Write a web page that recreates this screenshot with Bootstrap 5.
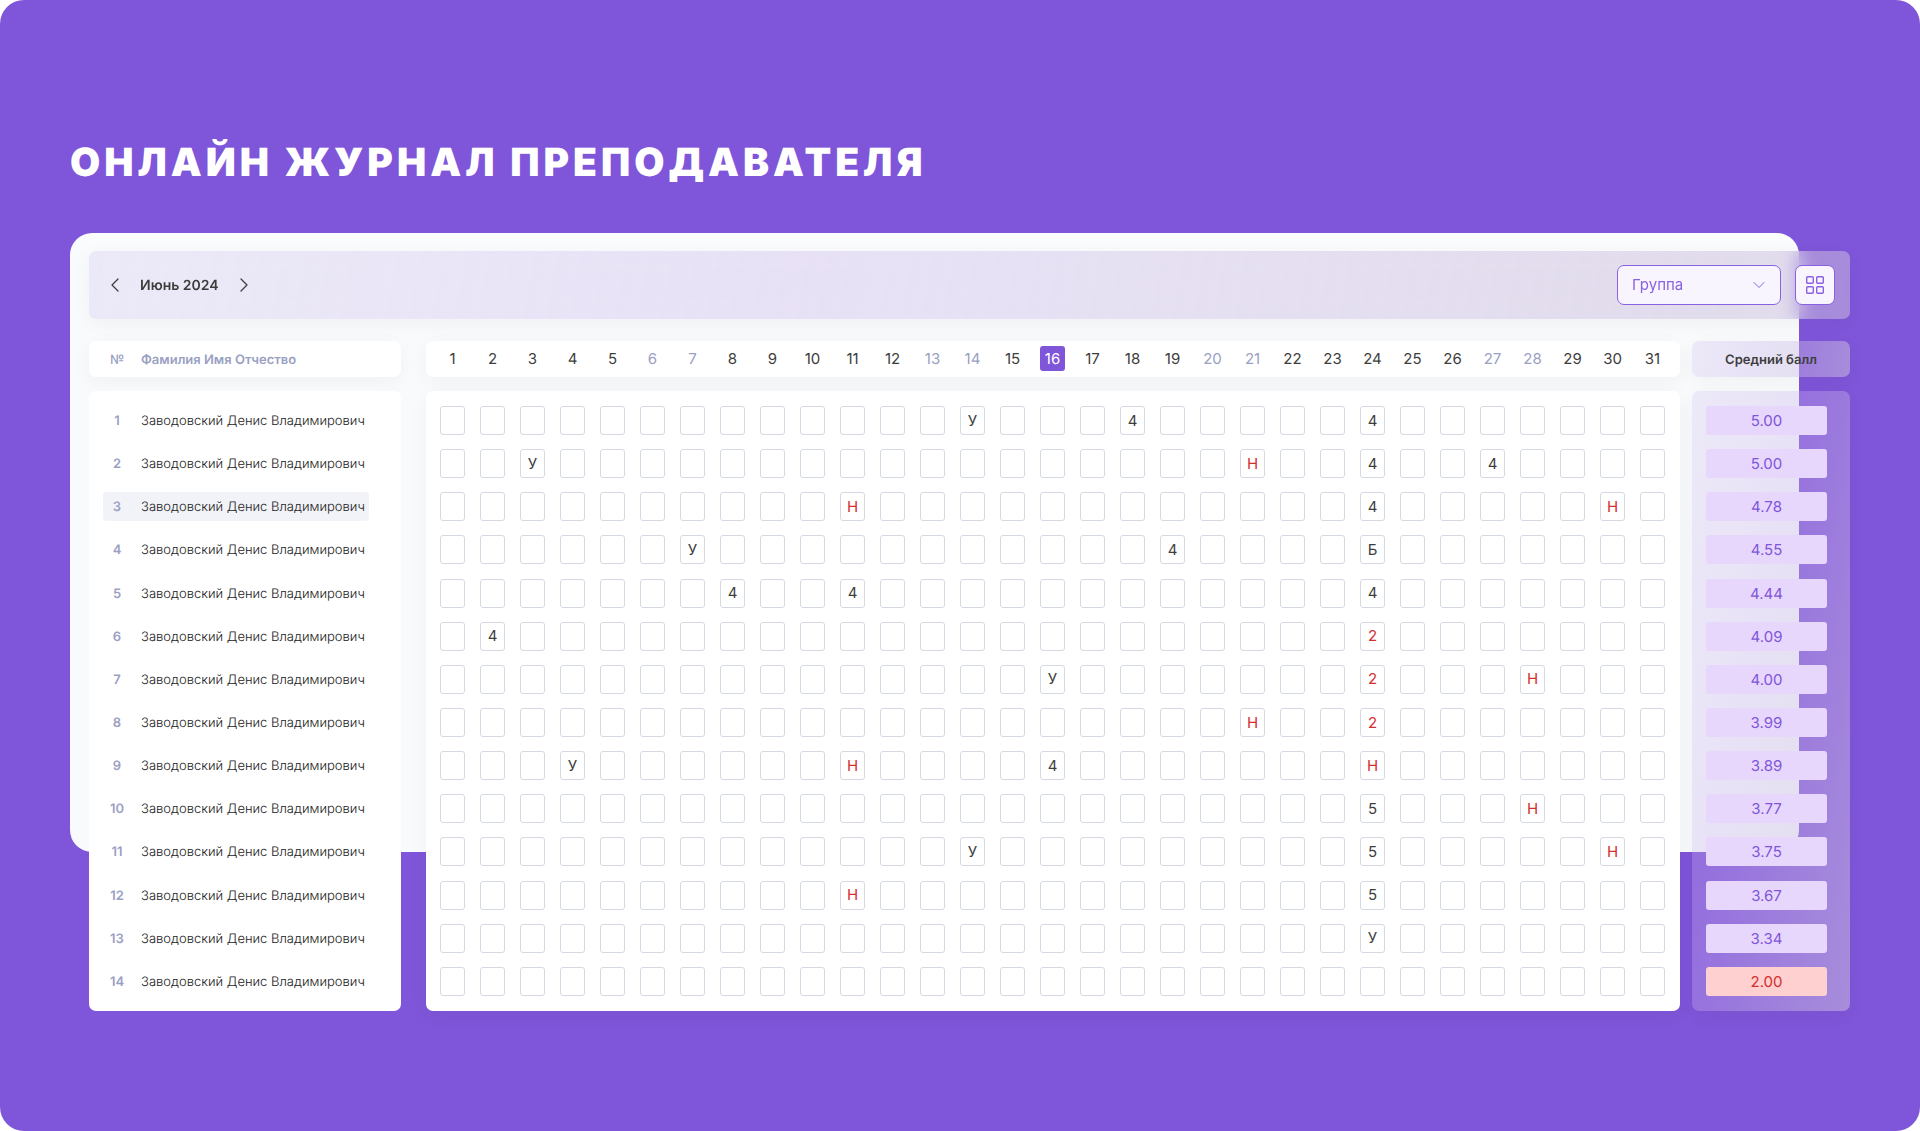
<!DOCTYPE html>
<html lang="ru">
<head>
<meta charset="utf-8">
<meta name="viewport" content="width=device-width, initial-scale=1">
<title>Онлайн журнал преподавателя</title>
<link href="https://cdn.jsdelivr.net/npm/bootstrap@5.3.0/dist/css/bootstrap.min.css" rel="stylesheet">
<style>
  :root {
    --violet: #7f55d9;
    --ink: #3d3d3d;
    --muted-ink: #9a9fc3;
    --danger-ink: #d32f2f;
    --glass: linear-gradient(100deg, rgba(187, 164, 232, .2), rgba(197, 174, 232, .32) 40%, rgba(204, 192, 221, .52));
    --soft-shadow: 0 5px 20px rgba(0, 0, 0, .04);
  }
  body { font-family: Inter, "Noto Sans", sans-serif; font-size: 15px; color: var(--ink); background: #fff; text-rendering: geometricPrecision; }
  .stage { min-height: 100vh; padding: 134px 70px 60px; background: var(--violet); border-radius: 24px; }
  .stage-title { font-size: 39px; line-height: 58px; font-weight: 900; letter-spacing: 4px; margin-bottom: 41px; }

  /* The pale sheet lies behind the journal and ends before it */
  .journal { padding: 18px 0 0 19px; isolation: isolate; }
  .journal::before {
    content: ""; position: absolute; inset: 0 51px 159px 0; z-index: -1;
    background: linear-gradient(#fbfcfd, #f8fafc 24px); border-radius: 22px;
  }

  .toolbar { height: 68px; padding: 0 15px 0 14px; margin-bottom: 22px; border-radius: 7px;
    background: var(--glass); box-shadow: var(--soft-shadow); backdrop-filter: blur(10px); }
  .step-btn { width: 24px; height: 24px; padding: 0; border: 0; background: none; color: var(--ink); display: grid; place-items: center; }
  .month { font-size: 14px; font-weight: 600; margin: 0 13px; }
  .tools { gap: 14px; }
  .group-select.form-select {
    width: 164px; padding: 8px 36px 8px 14px; font-size: 15px; line-height: 22px; color: #8a61e0;
    background-color: #f8f5ff; border: 1px solid #8a61e0; border-radius: 7px;
    background-image: url("data:image/svg+xml,%3Csvg xmlns='http://www.w3.org/2000/svg' viewBox='0 0 12 12'%3E%3Cpath d='M1 3.5l5 5 5-5' fill='none' stroke='%238a61e0' stroke-linecap='round' stroke-linejoin='round'/%3E%3C/svg%3E");
    background-size: 12px; background-position: right 15px center;
  }
  .view-btn { width: 40px; height: 40px; padding: 0; color: #8a61e0; background: #f8f5ff; border: 1px solid #8a61e0; border-radius: 7px; display: grid; place-items: center; }

  .boards { display: grid; grid-template-columns: 312px minmax(0, 1fr) 158px; }
  .board { display: block; border-spacing: 0; }
  .board thead, .board tbody { display: table; width: 100%; table-layout: fixed; border-collapse: separate; border-spacing: 0;
    background: #fff; border-radius: 7px; box-shadow: var(--soft-shadow); }
  .board thead { height: 36px; margin-bottom: 14px; }
  .board tbody { height: 620px; padding: 8px 7px; }
  .board th, .board td { padding: 0; vertical-align: middle; }

  .names-board thead, .names-board tbody { padding-left: 14px; padding-right: 32px; font-size: 13px; }
  .names-board tbody { box-shadow: none; }
  .num { width: 28px; color: var(--muted-ink); font-weight: 600; text-align: center; }
  thead .num { font-weight: 500; }
  .names-board thead th { padding-top: 3px; }
  .names-board .person-head { padding-left: 10px; color: var(--muted-ink); font-weight: 600; }
  .strip { height: 29px; line-height: 29px; white-space: nowrap; }
  .names-board .strip { line-height: 31px; }
  .person { font-weight: 300; color: #222; }
  .person .strip { padding-left: 10px; }
  .active-row .strip { background: #f2f3f8; }
  .active-row .num .strip { border-radius: 4px 0 0 4px; }
  .active-row .person .strip { border-radius: 0 4px 4px 0; }

  .days-board { margin-left: 25px; margin-right: 12px; }
  .days-board thead { padding: 0 7px; }
  .days-board th, .days-board td { padding: 0 8px 0 7px; text-align: center; }
  .days-board thead th { font-weight: 400; vertical-align: top; padding-top: 5px; }
  .day { display: block; height: 25px; line-height: 25px; border-radius: 3px; }
  .day-off { color: var(--muted-ink); }
  .day-now { color: #fff; background: var(--violet); }
  .mark-btn { display: block; width: 100%; height: 29px; padding: 0; line-height: 26px; font-size: 15px; color: var(--ink); background: #fff;
    border: 1px solid #d5d9e3; border-radius: 3px; }
  .mark-bad { color: var(--danger-ink); }

  .score-board thead, .score-board tbody { background: var(--glass); }
  .score-board thead th { padding-top: 3px; font-size: 13px; font-weight: 600; text-align: center; }
  .score-board tbody { padding: 8px 23px 8px 14px; }
  .score { text-align: center; border-radius: 3px; color: #7f55d9; background: #e8d7fd; }
  .score-low { color: var(--danger-ink); background: #ffd0d0; }
</style>
<script src="https://cdn.jsdelivr.net/npm/bootstrap@5.3.0/dist/js/bootstrap.bundle.min.js"></script>
</head>
<body>
<main class="stage">
  <h1 class="stage-title text-white text-uppercase">Онлайн журнал преподавателя</h1>

  <section class="journal position-relative">
    <div class="toolbar d-flex align-items-center">
      <button class="step-btn" type="button" aria-label="Предыдущий месяц">
        <svg width="8" height="14" viewBox="0 0 8 14" fill="none" stroke="currentColor" stroke-width="1.3" stroke-linecap="round" stroke-linejoin="round"><path d="M7 1L1 7l6 6"/></svg>
      </button>
      <span class="month">Июнь 2024</span>
      <button class="step-btn" type="button" aria-label="Следующий месяц">
        <svg width="8" height="14" viewBox="0 0 8 14" fill="none" stroke="currentColor" stroke-width="1.3" stroke-linecap="round" stroke-linejoin="round"><path d="M1 1l6 6-6 6"/></svg>
      </button>
      <div class="tools d-flex ms-auto">
        <select class="form-select group-select" id="group" aria-label="Группа"><option>Группа</option></select>
        <button class="view-btn" type="button" aria-label="Вид сетки">
          <svg width="20" height="20" viewBox="0 0 20 20" fill="none" stroke="currentColor" stroke-width="1.4"><rect x="1.7" y="1.7" width="6.6" height="6.6" rx="1"/><rect x="11.7" y="1.7" width="6.6" height="6.6" rx="1"/><rect x="1.7" y="11.7" width="6.6" height="6.6" rx="1"/><rect x="11.7" y="11.7" width="6.6" height="6.6" rx="1"/></svg>
        </button>
      </div>
    </div>

    <div class="boards">
      <table class="board names-board">
        <thead><tr><th class="num" scope="col">№</th><th class="person-head" scope="col">Фамилия Имя Отчество</th></tr></thead>
        <tbody id="names"></tbody>
      </table>
      <table class="board days-board">
        <thead><tr id="days"></tr></thead>
        <tbody id="marks"></tbody>
      </table>
      <table class="board score-board">
        <thead><tr><th scope="col">Средний балл</th></tr></thead>
        <tbody id="scores"></tbody>
      </table>
    </div>
  </section>
</main>

<script>
  const student = 'Заводовский Денис Владимирович';
  const activeRow = 3, today = 16, daysInMonth = 31;
  const daysOff = [6, 7, 13, 14, 20, 21, 27, 28];
  const journal = [
    { score: '5.00', marks: { 14: 'У', 18: '4', 24: '4' } },
    { score: '5.00', marks: { 3: 'У', 21: 'Н', 24: '4', 27: '4' } },
    { score: '4.78', marks: { 11: 'Н', 24: '4', 30: 'Н' } },
    { score: '4.55', marks: { 7: 'У', 19: '4', 24: 'Б' } },
    { score: '4.44', marks: { 8: '4', 11: '4', 24: '4' } },
    { score: '4.09', marks: { 2: '4', 24: '2' } },
    { score: '4.00', marks: { 16: 'У', 24: '2', 28: 'Н' } },
    { score: '3.99', marks: { 21: 'Н', 24: '2' } },
    { score: '3.89', marks: { 4: 'У', 11: 'Н', 16: '4', 24: 'Н' } },
    { score: '3.77', marks: { 24: '5', 28: 'Н' } },
    { score: '3.75', marks: { 14: 'У', 24: '5', 30: 'Н' } },
    { score: '3.67', marks: { 11: 'Н', 24: '5' } },
    { score: '3.34', marks: { 24: 'У' } },
    { score: '2.00', marks: {} }
  ];
  const days = Array.from({ length: daysInMonth }, (_, i) => i + 1);
  const fill = (id, html) => { document.getElementById(id).innerHTML = html; };

  fill('days', days.map(d => {
    const kind = d === today ? ' day-now' : daysOff.includes(d) ? ' day-off' : '';
    return `<th scope="col"><span class="day${kind}">${d}</span></th>`;
  }).join(''));

  fill('names', journal.map((_, i) =>
    `<tr class="${i + 1 === activeRow ? 'active-row' : ''}"><td class="num"><div class="strip">${i + 1}</div></td>` +
    `<td class="person"><div class="strip">${student}</div></td></tr>`).join(''));

  fill('marks', journal.map((row, i) => '<tr>' + days.map(d => {
    const mark = row.marks[d] || '';
    const bad = mark === 'Н' || mark === '2' ? ' mark-bad' : '';
    return `<td><button type="button" class="mark-btn${bad}" aria-label="Строка ${i + 1}, день ${d} ${mark}">${mark}</button></td>`;
  }).join('') + '</tr>').join(''));

  fill('scores', journal.map(row =>
    `<tr><td><div class="strip score${row.score < '3' ? ' score-low' : ''}">${row.score}</div></td></tr>`).join(''));
</script>
</body>
</html>
